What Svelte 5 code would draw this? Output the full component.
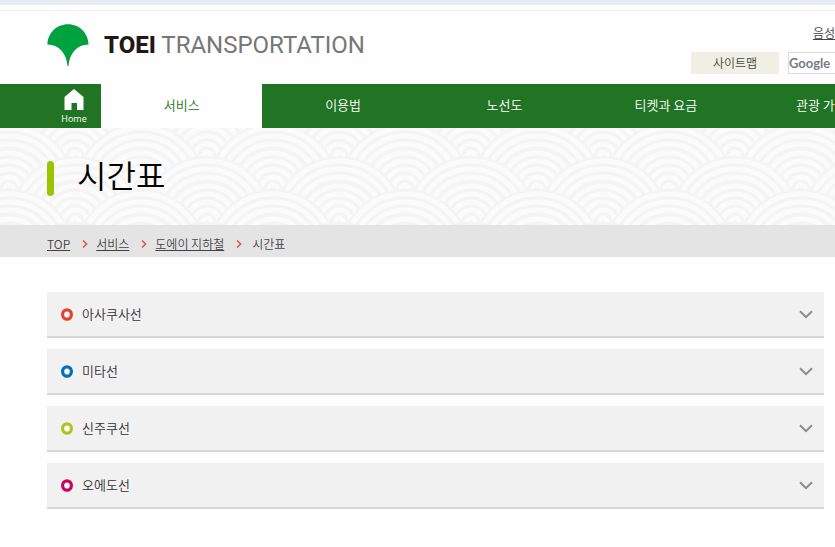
<script>
  const menu = ['서비스', '이용법', '노선도', '티켓과 요금', '관광 가이드'];
  const lines = [
    { name: '아사쿠사선', color: '#e8402f' },
    { name: '미타선', color: '#0070bd' },
    { name: '신주쿠선', color: '#aec421' },
    { name: '오에도선', color: '#c9045f' }
  ];
  const crumbs = ['TOP', '서비스', '도에이 지하철'];

  // Seigaiha waves: each row of circles overlaps the one above it.
  const waves = [0, 33, 66, 99, 132].flatMap((y, i) =>
    (i % 2 ? [0, 132] : [66]).map((x) => ({ x, y }))
  );
  const rings = [61, 53, 45, 36, 28, 20, 12, 4];

  let open = $state(-1);
</script>

<div class="page">
  <div class="strip"></div>
  <header>
    <a class="logo" href="#top" aria-label="TOEI TRANSPORTATION">
      <svg width="42" height="42" viewBox="0 0 42 42" aria-hidden="true">
        <path d="M.4 20.6C.8 9 9.600 .3 21 .3S41.200 9 41.600 20.600C30 20.600 22.400 29.500 21.500 42h-1C19.600 29.500 12 20.600 .4 20.600z" fill="#00a13f" />
      </svg>
      <span class="brand"><b>TOEI</b> TRANSPORTATION</span>
    </a>
    <div class="tools">
      <a class="voice" href="#voice">음성</a>
      <div class="search-row">
        <a class="sitemap" href="#sitemap">사이트맵</a>
        <input type="search" placeholder="Google" aria-label="Google" />
      </div>
    </div>
  </header>

  <nav>
    <a class="home" href="#home">
      <svg width="20" height="21" viewBox="0 0 20 21" aria-hidden="true">
        <path d="M10 0L19.500 8V21H13V14H7.500V21H.5V8z" fill="#fff" />
      </svg>
      Home
    </a>
    <div class="menu">
      {#each menu as item, i}
        <a href="#menu{i}" class:current={i === 0}>{item}</a>
      {/each}
    </div>
  </nav>

  <section class="hero">
    <svg class="waves" aria-hidden="true">
      <defs>
        <pattern id="seigaiha" x="9" y="28" width="132" height="66" patternUnits="userSpaceOnUse">
          {#each waves as w}
            <circle cx={w.x} cy={w.y} r="66" fill="#f4f4f4" />
            {#each rings as r}
              <circle cx={w.x} cy={w.y} {r} fill="none" stroke="#fbfbfb" stroke-width="5" />
            {/each}
          {/each}
        </pattern>
      </defs>
      <rect width="100%" height="100%" fill="url(#seigaiha)" />
    </svg>
    <h1>시간표</h1>
  </section>

  <div class="crumbs">
    {#each crumbs as c, i}
      <a href="#crumb{i}">{c}</a>
      <svg width="6" height="8" viewBox="0 0 6 8" aria-hidden="true">
        <path d="M1 .5L4.600 4L1 7.500" fill="none" stroke="#d9573f" stroke-width="1.500" />
      </svg>
    {/each}
    <span>시간표</span>
  </div>

  <main>
    {#each lines as line, i}
      <button type="button" aria-expanded={open === i} onclick={() => (open = open === i ? -1 : i)}>
        <svg width="12" height="13" viewBox="0 0 12 13" aria-hidden="true">
          <ellipse cx="6" cy="6.500" rx="4.400" ry="4.700" fill="#fff" stroke={line.color} stroke-width="3.200" />
        </svg>
        <span>{line.name}</span>
        <svg width="14" height="9" viewBox="0 0 14 9" aria-hidden="true">
          <path d="M1 1.200L7 7.200L13 1.200" fill="none" stroke="#8c8c8c" stroke-width="2" />
        </svg>
      </button>
    {/each}
  </main>
</div>

<style>
  .page {
    overflow: hidden;
    min-height: 100vh;
    background: #fefefe;
    color: #444;
    font-family: "Noto Sans CJK KR", sans-serif;
    font-size: 13px;
    font-weight: 350;
    line-height: 20px;
    white-space: nowrap;
  }
  a {
    color: inherit;
  }
  .strip {
    height: 5px;
    background: #e8ecf4;
  }
  header {
    display: flex;
    justify-content: space-between;
    height: 73px;
    margin-top: 5px;
    border-top: 1px solid #f1f1f1;
    padding-left: 47px;
  }
  .logo {
    display: flex;
    align-items: center;
    gap: 15px;
    height: 68px;
    text-decoration: none;
  }
  .brand {
    color: #777;
    font-family: Roboto, sans-serif;
    font-size: 24px;
    font-weight: 400;
  }
  b {
    color: #231815;
    font-weight: 800;
  }
  .tools {
    flex: 0 0 144px;
    min-width: 0;
    display: flex;
    flex-direction: column;
    gap: 9px;
    padding-top: 12px;
    font-size: 12px;
  }
  .voice {
    align-self: flex-end;
  }
  .search-row {
    display: flex;
    gap: 9px;
  }
  .sitemap {
    flex: 0 0 88px;
    background: #f0efe3;
    line-height: 22px;
    text-align: center;
    text-decoration: none;
  }
  input {
    box-sizing: border-box;
    flex: 0 0 160px;
    height: 22px;
    margin: 0;
    border: 1px solid #d8dbe0;
    padding: 0;
    background: #fff;
    font: 700 13px Lato, sans-serif;
  }
  input::placeholder {
    color: #777c84;
    opacity: 1;
  }
  nav {
    display: flex;
    min-width: 908px;
    height: 44px;
    background: #227425;
    color: #fff;
  }
  nav a {
    text-decoration: none;
  }
  .home {
    box-sizing: border-box;
    flex: 0 0 101px;
    display: flex;
    flex-direction: column;
    align-items: center;
    padding: 5px 0 0 47px;
    font-family: "Open Sans", sans-serif;
    font-size: 9px;
    font-weight: 400;
    line-height: 17px;
  }
  .menu {
    flex: 1;
    display: flex;
  }
  .menu a {
    flex: 1;
    line-height: 42px;
    text-align: center;
  }
  .menu .current {
    background: #fefefe;
    color: #227425;
  }
  .hero {
    position: relative;
    height: 97px;
  }
  .waves {
    position: absolute;
    inset: 0;
    width: 100%;
    height: 100%;
  }
  h1 {
    position: relative;
    display: flex;
    align-items: flex-end;
    gap: 23px;
    margin: 0;
    padding: 24px 47px 0;
    color: #000;
    font-size: 32px;
    font-weight: 350;
    line-height: 44px;
  }
  h1::before {
    content: "";
    width: 7px;
    height: 35px;
    border-radius: 4px;
    background: #9bc400;
  }
  .crumbs {
    box-sizing: border-box;
    display: flex;
    align-items: center;
    gap: 8px;
    height: 32px;
    padding: 6px 47px 0;
    background: #e4e4e4;
    font-size: 12px;
  }
  .crumbs svg {
    margin-left: 4px;
  }
  .crumbs span {
    padding-left: 2px;
  }
  main {
    display: flex;
    flex-direction: column;
    gap: 11px;
    padding: 35px 11px 35px 47px;
  }
  button {
    display: flex;
    align-items: center;
    gap: 9px;
    height: 46px;
    margin: 0;
    border: 0;
    border-bottom: 2px solid #d6d6d6;
    padding: 0 11px 0 14px;
    background: #f1f1f1;
    color: #333;
    font: inherit;
    text-align: left;
    cursor: pointer;
  }
  button span {
    flex: 1;
  }
</style>
